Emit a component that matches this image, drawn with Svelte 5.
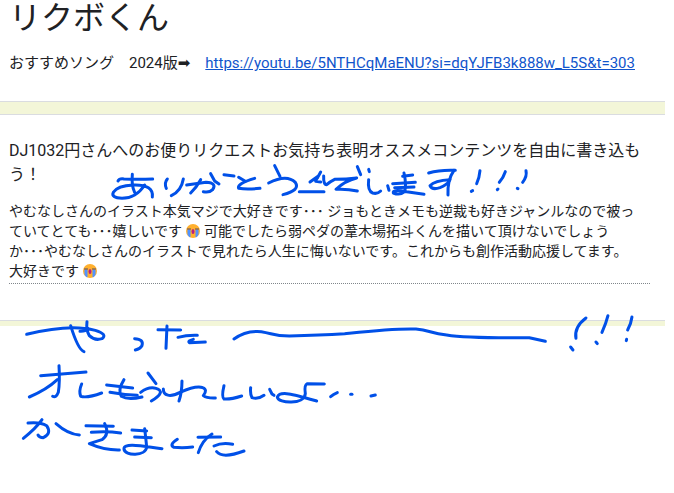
<script>
	const title = 'リクボくん';
	const songUrl = 'https://youtu.be/5NTHCqMaENU?si=dqYJFB3k888w_L5S&t=303';

	// Pen strokes, grouped by phrase. Each group is drawn at three units to the pixel.
	const notes = [
		{
			x: 100,
			y: 155,
			label: 'ありがとうございます!!!',
			strokes: [
				'M54 78Q58 70 72 72Q115 74 158 72',
				'M97 58Q94 92 104 112',
				'M134 90Q108 130 66 130Q32 128 40 112Q52 92 100 90Q162 88 157 126',
				'M202 72Q192 84 199 100',
				'M250 72Q244 108 214 122',
				'M260 90L318 82Q352 84 338 104Q328 114 310 110',
				'M302 74Q290 96 272 114',
				'M332 56L344 78L357 87',
				'M372 59L402 63',
				'M416 67L436 79',
				'M464 70Q410 86 416 100Q440 104 480 100',
				'M524 32L540 64',
				'M506 84Q560 56 586 82Q602 106 549 119',
				'M598 110L672 110'
			]
		},
		{
			x: 290,
			y: 160,
			label: '',
			strokes: [
				'M60 66L82 50L77 64L92 66',
				'M92 36L82 54',
				'M101 48Q100 74 110 74Q118 66 134 58Q170 58 200 54Q166 62 138 88Q170 86 202 93',
				'M202 20L212 44',
				'M236 28L238 35'
			]
		},
		{
			x: 310,
			y: 155,
			label: '',
			strokes: [
				'M176 74Q172 108 188 114Q202 118 212 108',
				'M233 92L237 106',
				'M248 86L316 82',
				'M254 98L312 96',
				'M282 54Q290 90 284 110Q270 122 250 114Q246 102 290 110L342 118',
				'M278 64L308 60',
				'M356 54Q390 44 436 46',
				'M432 46Q412 74 414 120',
				'M420 74Q374 76 360 92Q366 106 390 98Q410 90 418 78',
				'M510 47Q508 70 500 86',
				'M484 109L488 107',
				'M586 50Q580 68 568 82',
				'M562 104L564 102',
				'M648 47Q652 64 638 82',
				'M622 100L624 101'
			]
		},
		{
			x: 0,
			y: 305,
			label: 'やった',
			strokes: [
				'M80 88Q210 56 286 76Q324 88 306 101Q284 108 268 92Q258 76 261 50',
				'M240 79Q256 80 264 70',
				'M212 62Q234 134 252 140',
				'M404 101Q432 102 426 122Q420 132 406 135',
				'M474 74L542 75',
				'M501 63L498 130',
				'M534 97Q560 90 592 91',
				'M580 103Q562 108 568 113L616 111'
			]
		},
		{
			x: 220,
			y: 305,
			label: 'ーーー!!!',
			strokes: [
				'M42 102Q78 76 124 80C160 86 160 93 208 93Q300 90 374 86C450 78 520 70 588 72C630 76 630 84 680 90Q740 100 928 98L976 109',
				'M1098 39Q1062 66 1068 100',
				'M1052 126L1059 135',
				'M1164 32Q1158 56 1146 82',
				'M1128 111L1132 116',
				'M1236 36Q1234 54 1223 75',
				'M1220 103L1219 107'
			]
		},
		{
			x: 10,
			y: 355,
			label: 'オレもうれしいよ…',
			strokes: [
				'M92 62L228 51',
				'M147 32Q150 80 145 112Q138 130 128 124',
				'M142 74Q110 104 58 126',
				'M215 87Q206 108 212 124Q232 130 275 114',
				'M290 90L368 99',
				'M300 112Q342 120 382 121',
				'M342 74Q322 106 334 124Q354 136 396 126',
				'M414 54L438 86',
				'M392 112Q416 94 438 100Q470 110 424 138',
				'M460 102C460 122 480 128 510 112Q560 90 578 98Q594 104 580 122Q590 130 616 129',
				'M516 78Q516 112 507 138'
			]
		},
		{
			x: 200,
			y: 355,
			label: '',
			strokes: [
				'M72 92Q64 126 72 132Q90 134 125 123',
				'M152 98Q150 118 156 128Q174 134 192 121',
				'M209 103L216 117L222 121',
				'M373 87L322 86Q312 90 316 116C314 150 234 146 232 126C240 106 280 118 350 138',
				'M392 125Q400 118 412 113',
				'M452 118L456 118',
				'M513 123L526 120'
			]
		},
		{
			x: 10,
			y: 405,
			label: 'かきました',
			strokes: [
				'M54 54Q90 50 110 62Q126 86 100 98Q88 98 84 90',
				'M96 44Q78 70 40 100',
				'M138 56Q174 88 208 90',
				'M228 62L310 64',
				'M244 82Q290 78 332 84',
				'M284 56Q300 88 276 104L238 116Q284 136 328 135',
				'M366 75L410 78',
				'M374 96L424 98',
				'M404 71Q408 104 410 126C408 154 344 154 342 132C340 112 400 124 456 131',
				'M502 103Q476 120 492 127Q520 130 548 126',
				'M564 97L632 96',
				'M606 87Q576 106 565 143',
				'M612 123Q636 112 668 118',
				'M620 140Q638 162 702 138'
			]
		}
	];
</script>

{#snippet crying()}
	<svg class="emoji" viewBox="0 0 16 16" role="img" aria-label="大泣き">
		<circle cx="8" cy="8" r="7" fill="#ffb02e" />
		<path d="M3 7h2v7Q3 13 3 11zM11 7h2v4q0 2-2 3z" fill="#5092ff" stroke="#5092ff" />
		<path d="M2 6h4M10 6h4" fill="none" stroke="#5c4a5a" />
		<ellipse cx="8" cy="8.5" rx="1.5" ry="2.5" fill="#bb1d80" />
	</svg>
{/snippet}

<main class="page">
	<section class="intro">
		<h1>{title}</h1>
		<p class="song">
			おすすめソング　2024版<span class="arrow">➡</span>　<a href={songUrl}>{songUrl}</a>
		</p>
	</section>

	<div class="gap"></div>

	<section class="question">
		<h2>DJ1032円さんへのお便りリクエストお気持ち表明オススメコンテンツを自由に書き込もう！</h2>
		<p class="answer">
			やむなしさんのイラスト本気マジで大好きです･･･ ジョもときメモも逆裁も好きジャンルなので被っ<br />
			ていてとても･･･嬉しいです{@render crying()}可能でしたら弱ペダの葦木場拓斗くんを描いて頂けないでしょう<br />
			か･･･やむなしさんのイラストで見れたら人生に悔いないです。これからも創作活動応援してます。<br />
			大好きです{@render crying()}
		</p>
	</section>

	<div class="gap last"></div>

	<svg class="ink" role="img" aria-label={notes.map((n) => n.label).join(' ')}>
		{#each notes as note}
			<g transform="translate({note.x} {note.y}) scale(0.3333)">
				{#each note.strokes as d}
					<path {d} />
				{/each}
			</g>
		{/each}
	</svg>
</main>

<style>
	:global(body) {
		margin: 0;
		background: #fff;
	}

	.page {
		position: relative;
		min-height: 100vh;
		overflow: hidden;
		color: #202124;
		font-family: Roboto, 'Noto Sans CJK JP', sans-serif;
		font-weight: 400;
	}

	.intro,
	.question {
		margin-right: 9px;
		border-bottom: 1px solid #dadce0;
	}

	.intro {
		padding: 0 9px 28px;
	}

	h1 {
		margin: 0;
		font-size: 32px;
		line-height: 36px;
		font-weight: 400;
	}

	.song {
		margin: 17px 0 0;
		font-size: 15px;
		line-height: 20px;
		white-space: nowrap;
	}

	.arrow {
		font-family: 'DejaVu Sans', sans-serif;
	}

	a {
		color: #1155cc;
	}

	.question {
		padding: 24px 15px 36px 9px;
		border-top: 1px solid #dadce0;
	}

	h2 {
		margin: 0;
		font-size: 16px;
		line-height: 24px;
		font-weight: 400;
	}

	.answer {
		margin: 14px 0 0;
		padding-bottom: 2px;
		border-bottom: 1px dotted #80868b;
		font-size: 14px;
		line-height: 20px;
	}

	.emoji {
		width: 16px;
		height: 16px;
		margin: 0 3px;
		vertical-align: -3px;
	}

	.gap {
		height: 12px;
		margin-right: 9px;
		background: #f3f6d8;
	}

	.gap.last {
		height: 5px;
	}

	.ink {
		position: absolute;
		top: 0;
		left: 0;
		width: 100%;
		height: 100%;
		overflow: visible;
		pointer-events: none;
	}

	.ink path {
		fill: none;
		stroke: #0050e8;
		stroke-width: 9;
		stroke-linecap: round;
		stroke-linejoin: round;
	}
</style>
